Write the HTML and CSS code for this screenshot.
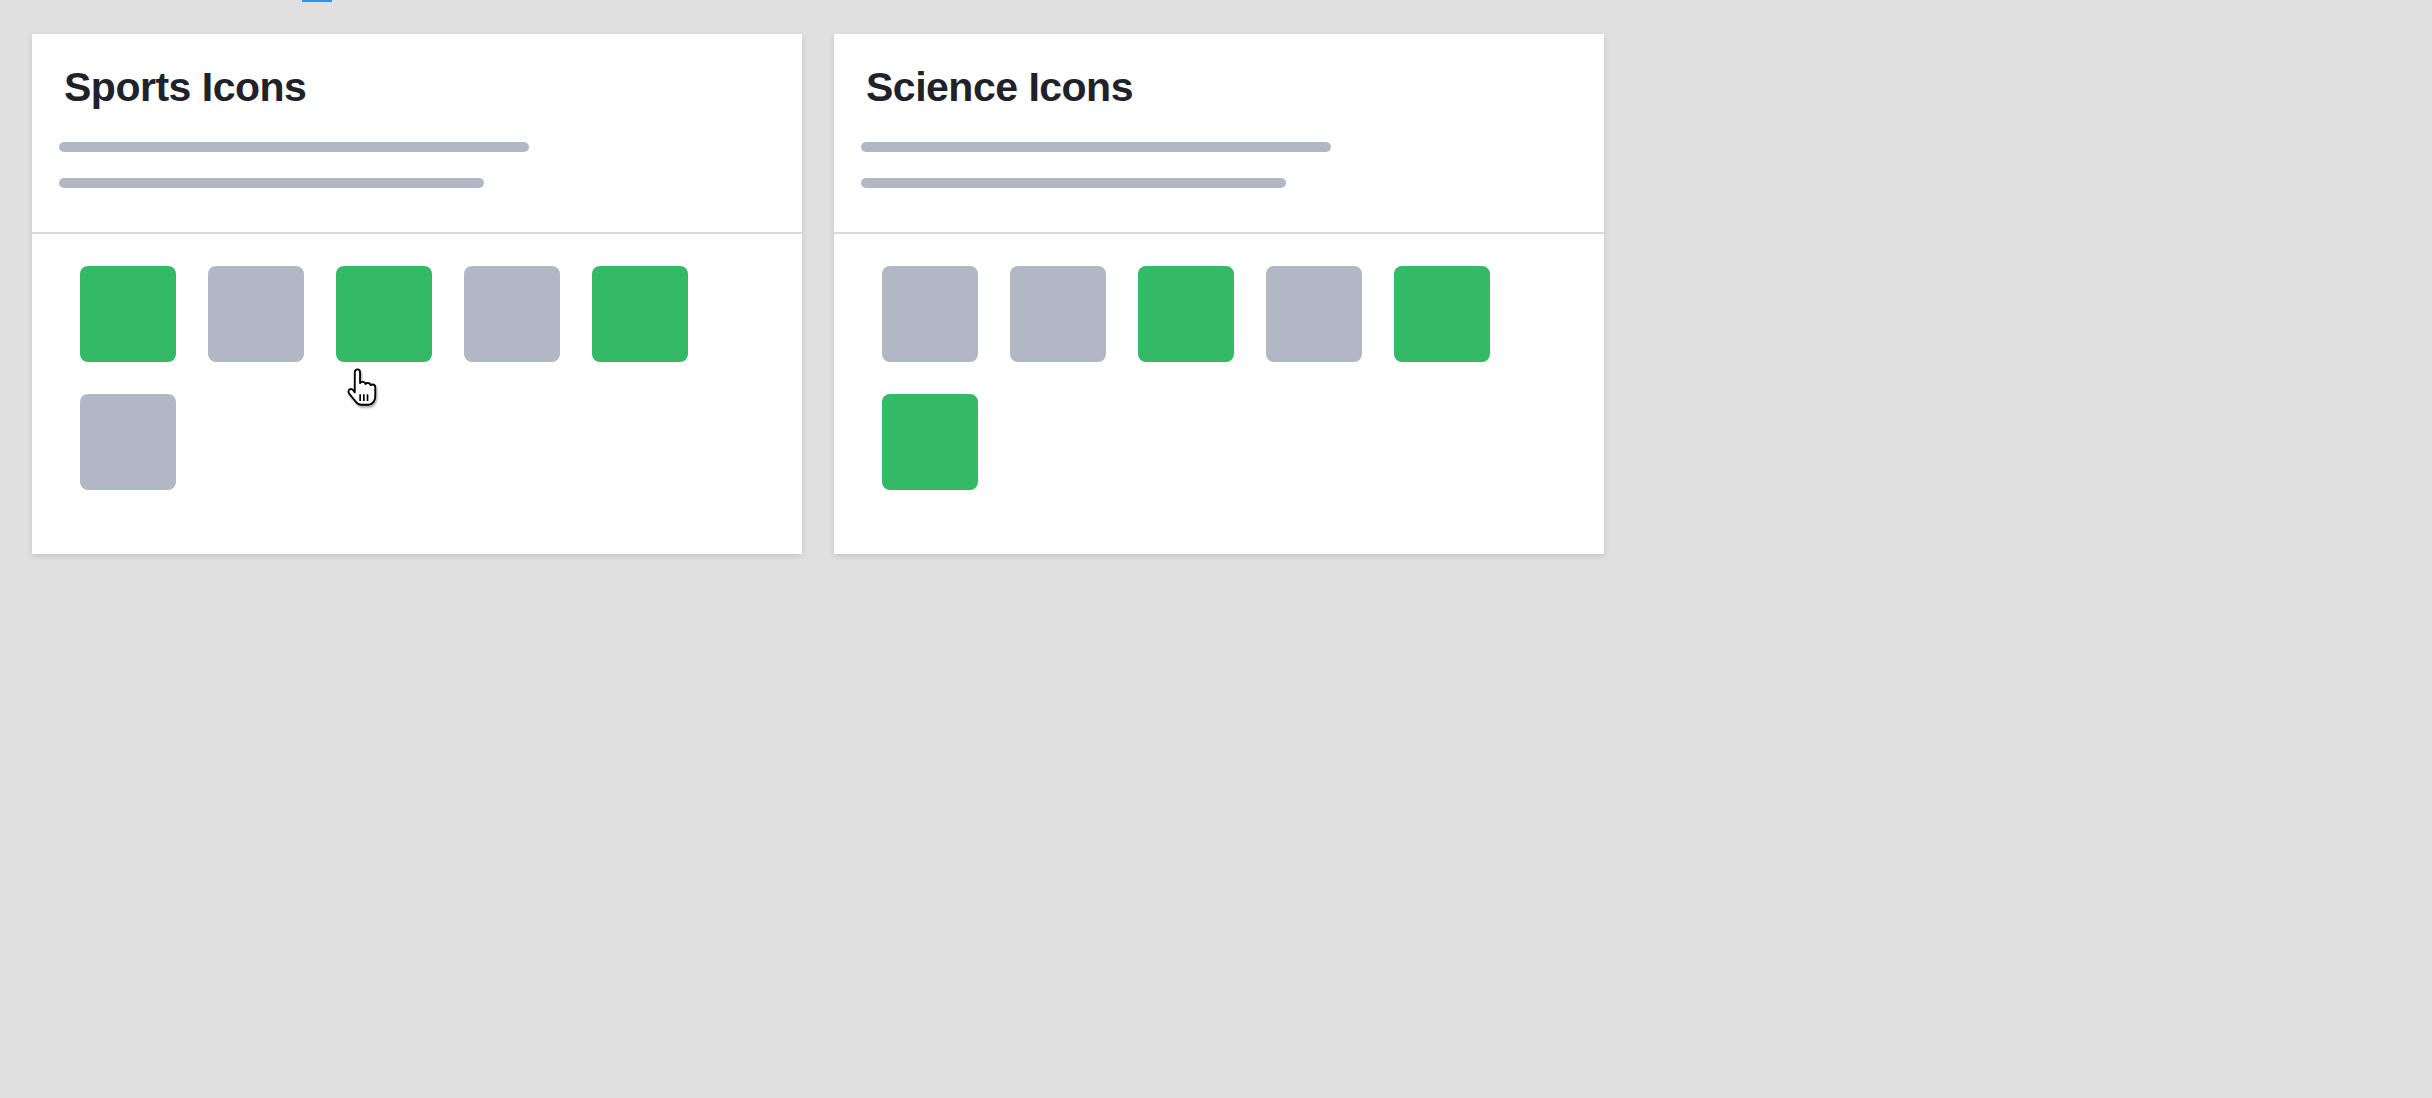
FILE: index.html
```html
<!DOCTYPE html>
<html lang="en">
<head>
<meta charset="utf-8">
<title>Icon Sets</title>
<link rel="stylesheet" href="styles.css">
</head>
<body>
<div class="page">
  <div class="topbar"><span class="tab-indicator"></span></div>
  <main class="cards">
    <section class="card">
      <header class="card-header">
        <h2 class="card-title">Sports Icons</h2>
        <div class="line line-long"></div>
        <div class="line line-short"></div>
      </header>
      <div class="card-body">
        <div class="tile tile-on"></div>
        <div class="tile tile-off"></div>
        <div class="tile tile-on"></div>
        <div class="tile tile-off"></div>
        <div class="tile tile-on"></div>
        <div class="tile tile-off"></div>
      </div>
    </section>
    <section class="card">
      <header class="card-header">
        <h2 class="card-title">Science Icons</h2>
        <div class="line line-long"></div>
        <div class="line line-short"></div>
      </header>
      <div class="card-body">
        <div class="tile tile-off"></div>
        <div class="tile tile-off"></div>
        <div class="tile tile-on"></div>
        <div class="tile tile-off"></div>
        <div class="tile tile-on"></div>
        <div class="tile tile-on"></div>
      </div>
    </section>
  </main>
  <svg class="cursor" viewBox="0 0 32 32" width="42" height="42" aria-hidden="true">
    <path d="M10.5 3.2c0-1.2.9-2.1 2-2.1s2 .9 2 2.1v8.3c.5-.6 1.2-.9 2-.9 1.1 0 1.9.7 2.1 1.6.4-.5 1.1-.8 1.8-.8 1.1 0 1.9.7 2.1 1.7.4-.3.9-.5 1.5-.5 1.2 0 2.1 1 2.1 2.3v6.6c0 3.3-2.1 6.5-5.3 6.5h-5.2c-2.1 0-3.4-1-4.6-2.7L6.1 19.3c-.7-1-.5-2.3.4-2.9.9-.7 2.1-.4 2.8.6l1.2 1.6z" fill="#fff" stroke="#000" stroke-width="1.4" stroke-linejoin="round"/>
    <path d="M14.6 20v5.2M17.4 20v5.2M20.2 20v5.2" stroke="#000" stroke-width="1.3" fill="none"/>
  </svg>
</div>
</body>
</html>
```
FILE: styles.css
```css
html, body {
  margin: 0;
  padding: 0;
}

body {
  background: #e0e0e0;
  font-family: "Liberation Sans", Arial, Helvetica, sans-serif;
  width: 2432px;
  height: 1098px;
  overflow: hidden;
}

.page {
  position: relative;
  height: 100%;
}

.topbar {
  height: 2px;
  display: flex;
}

.tab-indicator {
  display: block;
  width: 30px;
  height: 2px;
  margin-left: 302px;
  background: #2196f3;
}

.cards {
  display: flex;
  align-items: flex-start;
  gap: 32px;
  padding: 32px;
}

.card {
  width: 770px;
  background: #ffffff;
  box-shadow: 0 2px 6px rgba(0, 0, 0, 0.13);
}

.card-header {
  padding: 29px 27px 44px;
  border-bottom: 2px solid #d5dde0;
}

.card-title {
  margin: 0 0 31px 5px;
  font-size: 41px;
  line-height: 48px;
  font-weight: 700;
  letter-spacing: -0.5px;
  color: #1f2329;
}

.line {
  height: 10px;
  border-radius: 5px;
  background: #b0b8c5;
}

.line-long {
  width: 470px;
}

.line-short {
  width: 425px;
  margin-top: 26px;
}

.card-body {
  display: flex;
  flex-wrap: wrap;
  gap: 32px;
  padding: 32px 48px 64px;
}

.tile {
  width: 96px;
  height: 96px;
  border-radius: 8px;
}

.tile-on {
  background: #34b967;
}

.tile-off {
  background: #b0b8c5;
}

.cursor {
  position: absolute;
  left: 341px;
  top: 368px;
  filter: drop-shadow(1px 2px 1px rgba(0, 0, 0, 0.35));
}
```
